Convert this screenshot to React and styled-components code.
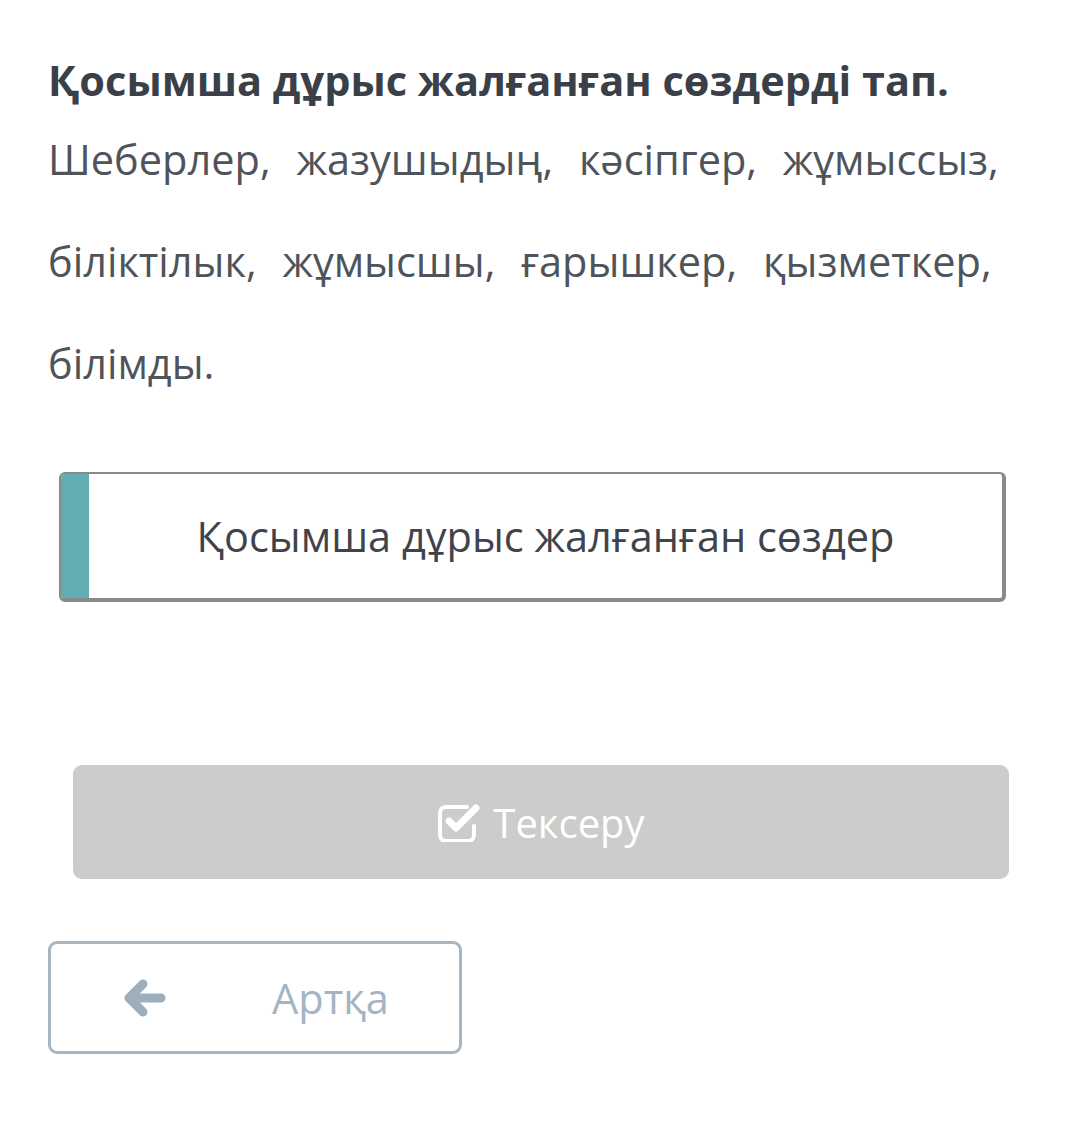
import React from "react";
import styled, { createGlobalStyle } from "styled-components";

const Global = createGlobalStyle`
  html, body { margin: 0; padding: 0; background: #fff; }
  body { font-family: "Open Sans", "Noto Sans", sans-serif; }
`;

const Page = styled.div`
  width: 1080px;
  height: 1124px;
  box-sizing: border-box;
  padding: 52px 60px 0 48px;
  display: flex;
  flex-direction: column;
`;

const Title = styled.h1`
  margin: 0;
  font-size: 41.5px;
  font-weight: 700;
  line-height: 56px;
  color: #3a3f48;
  white-space: nowrap;
`;

const Words = styled.p`
  margin: 0;
  font-size: 41.5px;
  font-weight: 400;
  line-height: 102px;
  color: #4f545b;
  word-spacing: 15px;
`;

const Card = styled.div`
  margin: 58px 0 0 11px;
  width: 947px;
  height: 130px;
  box-sizing: border-box;
  display: flex;
  border: 2px solid #8a8a8a;
  border-right-width: 4px;
  border-bottom-width: 4px;
  border-radius: 6px;
  overflow: hidden;
  background: #fff;
`;

const Stripe = styled.div`
  width: 28px;
  flex: none;
  background: #62adb1;
`;

const CardText = styled.div`
  flex: 1;
  display: flex;
  align-items: center;
  justify-content: center;
  font-size: 41.5px;
  color: #3f444c;
`;

const CheckButton = styled.button`
  margin: 163px 0 0 25px;
  width: 936px;
  height: 114px;
  border: none;
  border-radius: 9px;
  background: #cccccc;
  color: #fff;
  font-family: inherit;
  font-size: 40px;
  display: flex;
  align-items: center;
  justify-content: center;
  gap: 10px;
  padding: 0;
`;

const BackButton = styled.button`
  margin: 62px 0 0 0;
  width: 414px;
  height: 113px;
  box-sizing: border-box;
  border: 3px solid #a7b6c0;
  border-radius: 9px;
  background: #fff;
  color: #a3b4c2;
  font-family: inherit;
  font-size: 41.5px;
  display: flex;
  align-items: center;
  padding: 0 0 0 72px;
`;

const ArrowIcon = styled.svg`
  flex: none;
  margin-right: 105px;
`;

const CheckIcon = () => (
  <svg width="46" height="40" viewBox="0 0 46 40" aria-hidden="true">
    <path
      d="M30 5 H9 a6 6 0 0 0 -6 6 v22 a6 6 0 0 0 6 6 h22 a6 6 0 0 0 6 -6 v-9"
      fill="none"
      stroke="#fff"
      strokeWidth="4"
      strokeLinecap="round"
    />
    <path
      d="M12 19 L19 26 L39 6"
      fill="none"
      stroke="#fff"
      strokeWidth="7"
      strokeLinecap="round"
      strokeLinejoin="round"
    />
  </svg>
);

const BackArrow = () => (
  <ArrowIcon width="44" height="40" viewBox="0 0 44 40" aria-hidden="true">
    <path
      d="M20 6 L6 20 L20 34 M7 20 H38"
      fill="none"
      stroke="#9dafbd"
      strokeWidth="9"
      strokeLinecap="round"
      strokeLinejoin="round"
    />
  </ArrowIcon>
);

export default function App() {
  return (
    <>
      <Global />
      <Page>
        <Title>Қосымша дұрыс жалғанған сөздерді тап.</Title>
        <Words>
          Шеберлер, жазушыдың, кәсіпгер, жұмыссыз, біліктілык, жұмысшы,
          ғарышкер, қызметкер, білімды.
        </Words>
        <Card>
          <Stripe />
          <CardText>Қосымша дұрыс жалғанған сөздер</CardText>
        </Card>
        <CheckButton>
          <CheckIcon />
          <span>Тексеру</span>
        </CheckButton>
        <BackButton>
          <BackArrow />
          <span>Артқа</span>
        </BackButton>
      </Page>
    </>
  );
}
